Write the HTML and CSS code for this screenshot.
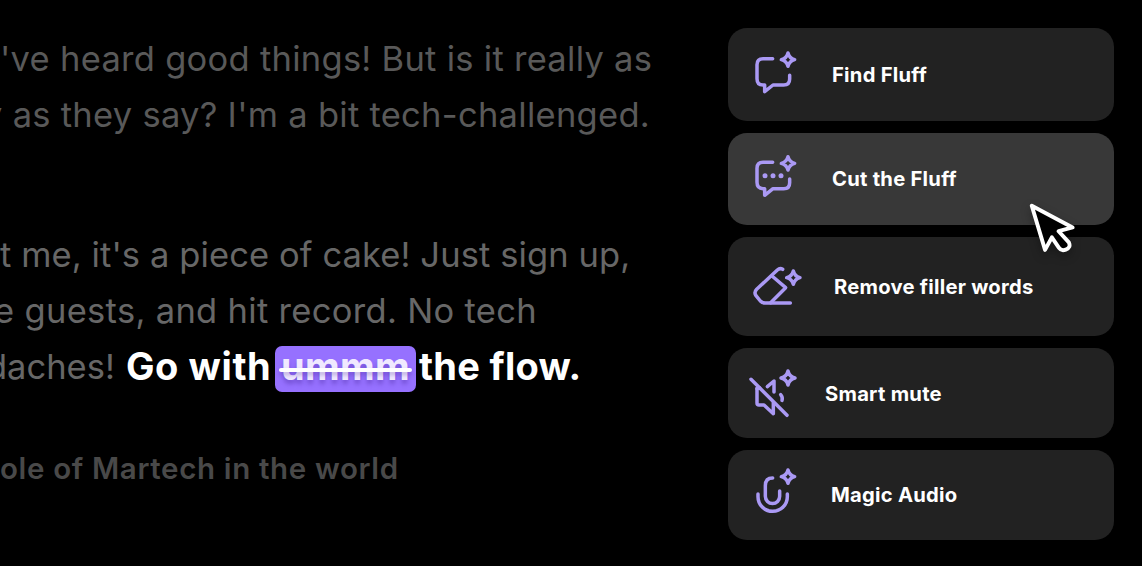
FILE: index.html
```
<!DOCTYPE html>
<html lang="en">

<head>
  <meta charset="UTF-8">
  <meta name="viewport" content="width=device-width, initial-scale=1.0">
  <title>Transcript editor</title>
  <link rel="stylesheet" href="styles.css">
</head>

<body>
  <main class="editor">
    <section class="transcript">
      <p class="paragraph question">
        <span class="line line-1">'ve heard good things! But is it really as</span>
        <span class="line line-2">y as they say? I'm a bit tech-challenged.</span>
      </p>
      <p class="paragraph answer">
        <span class="line line-3">t me, it's a piece of cake! Just sign up,</span>
        <span class="line line-4">e guests, and hit record. No tech</span>
        <span class="line line-5"><span class="lead">daches!</span><strong class="go">Go with</strong><del class="filler">ummm</del><strong class="flow">the flow.</strong></span>
      </p>
      <h2 class="chapter">ole of Martech in the world</h2>
    </section>

    <nav class="tools">
      <button class="tool find">
        <svg class="icon" viewBox="0 5 240 195">
          <path d="M98 55H69Q51 55 51 73V115Q51 134 69 134H74V154L99 134H131Q149 134 149 116V105" />
          <path d="M144 38Q148 54 164 58Q148 62 144 78Q140 62 124 58Q140 54 144 38Z" />
        </svg>
        <span class="label">Find Fluff</span>
      </button>
      <button class="tool cut active">
        <svg class="icon" viewBox="0 4 240 195">
          <path d="M98 53H69Q51 53 51 71V113Q51 132 69 132H74V152L99 132H131Q149 132 149 114V103" />
          <path d="M144 36Q148 52 164 56Q148 60 144 76Q140 60 124 56Q140 52 144 36Z" />
          <g class="dots">
            <circle cx="75" cy="93" r="7.5" />
            <circle cx="99" cy="93" r="7.5" />
            <circle cx="123" cy="93" r="7.5" />
          </g>
        </svg>
        <span class="label">Cut the Fluff</span>
      </button>
      <button class="tool remove">
        <svg class="icon" viewBox="0 -3 240 195">
          <path d="M128 43Q120 38 112 45L50 103Q41 112 48 122L61 138Q67 144 76 144H151" />
          <path d="M96 63L137 98L92 143" />
          <path d="M160 48Q164 64 180 68Q164 72 160 88Q156 72 140 68Q156 64 160 48Z" />
        </svg>
        <span class="label">Remove filler words</span>
      </button>
      <button class="tool mute">
        <svg class="icon" viewBox="0 3 240 195">
          <path d="M33 58L141 166" />
          <path d="M51 85V129Q51 135 57 135H72L100 161V128" />
          <path d="M51 86L59 84" />
          <path d="M82 80L102 63V96" />
          <path d="M122 104Q129 112 126 121" />
          <path d="M144 33Q148 50 165 54Q148 58 144 75Q140 58 123 54Q140 50 144 33Z" />
        </svg>
        <span class="label">Smart mute</span>
      </button>
      <button class="tool audio">
        <svg class="icon" viewBox="0 7 240 195">
          <path d="M98 55Q76 55 76 78V110A21.500 21.500 0 0 0 119 110V94" />
          <path d="M54 103V111A44 44 0 0 0 142 111V103" />
          <path d="M144 31Q148 47 164 51Q148 55 144 71Q140 55 124 51Q140 47 144 31Z" />
        </svg>
        <span class="label">Magic Audio</span>
      </button>
    </nav>

    <svg class="cursor" viewBox="0 0 132 150">
      <path class="arrow" d="M8 8L47 138L67 101L88 132Q95 142 108 137Q124 131 117 116L87 83L128 72Z" />
    </svg>
  </main>
</body>

</html>
```
FILE: styles.css
```
* {
  box-sizing: border-box;
}

body {
  margin: 0;
  background: #000;
  font-family: Inter, sans-serif;
  font-optical-sizing: none;
}

.editor {
  position: relative;
  display: flex;
  width: 1142px;
  height: 566px;
  overflow: hidden;
}

/* transcript */
.transcript {
  width: 728px;
  padding-top: 31px;
  white-space: nowrap;
}

.paragraph {
  margin: 0;
  font-size: 34.5px;
  line-height: 56px;
  letter-spacing: 0.28px;
}

.question {
  color: #595959;
}

.answer {
  margin-top: 84px;
  color: #676767;
}

.line {
  display: block;
  height: 56px;
}

.line-2 {
  margin-left: -17px;
}

.line-3 {
  letter-spacing: 0.1px;
}

.line-4 {
  margin-left: -6px;
  letter-spacing: 0.32px;
}

.line-5 {
  display: flex;
  margin-left: -14px;
  letter-spacing: 0;
}

.lead {
  width: 140px;
}

strong,
.filler {
  color: #fff;
  font-size: 38px;
  font-weight: 700;
  letter-spacing: 0.3px;
  line-height: 54px;
}

.go {
  width: 149px;
  letter-spacing: 0.6px;
}

.filler {
  position: relative;
  width: 141px;
  height: 46px;
  margin: 7px 3px 0 0;
  border-radius: 7px;
  background: #9671ff;
  color: #f0e9ff;
  line-height: 40px;
  text-align: center;
  text-decoration: none;
  text-shadow: 0 4px 4px rgba(60, 30, 140, 0.35);
}

.filler::after {
  content: "";
  position: absolute;
  top: 22px;
  left: 4px;
  width: 133px;
  height: 4px;
  border-radius: 2px;
  background: #fff;
  box-shadow: 0 3px 4px rgba(60, 30, 140, 0.3);
}

.chapter {
  margin: 55px 0 0;
  color: #494949;
  font-size: 29.5px;
  font-weight: 600;
  line-height: 36px;
  letter-spacing: 0.65px;
}

/* tool buttons */
.tools {
  display: flex;
  flex-direction: column;
  width: 386px;
  padding-top: 28px;
}

.tool {
  display: flex;
  align-items: center;
  flex-shrink: 0;
  height: 92.5px;
  margin: 0 0 12px;
  padding: 0 0 0 12px;
  border: none;
  border-radius: 19px;
  background: #222;
  color: #fff;
  font-family: inherit;
  font-size: 20.2px;
  font-weight: 700;
  letter-spacing: 0.25px;
  cursor: pointer;
}

.tool.active {
  background: #383838;
}

.tool.remove {
  height: 99px;
}

.tool.mute {
  height: 90px;
}

.tool.audio {
  height: 89.5px;
}

.icon {
  width: 80px;
  height: 65px;
  fill: none;
  stroke: #aa99f4;
  stroke-width: 10.5;
  stroke-linecap: round;
  stroke-linejoin: round;
}

.dots {
  fill: #aa99f4;
  stroke: none;
}

.label {
  margin-left: 12px;
}

.remove .label {
  margin-left: 14px;
}

.mute .label {
  margin-left: 5px;
}

.audio .label {
  margin-left: 11px;
}

/* pointer over the active tool */
.cursor {
  position: absolute;
  top: 203px;
  left: 1029px;
  width: 45px;
  height: 51px;
  overflow: visible;
  filter: drop-shadow(0 4px 5px rgba(0, 0, 0, 0.3));
}

.arrow {
  fill: #000;
  stroke: #fff;
  stroke-width: 11.5;
  stroke-linejoin: round;
}
```
